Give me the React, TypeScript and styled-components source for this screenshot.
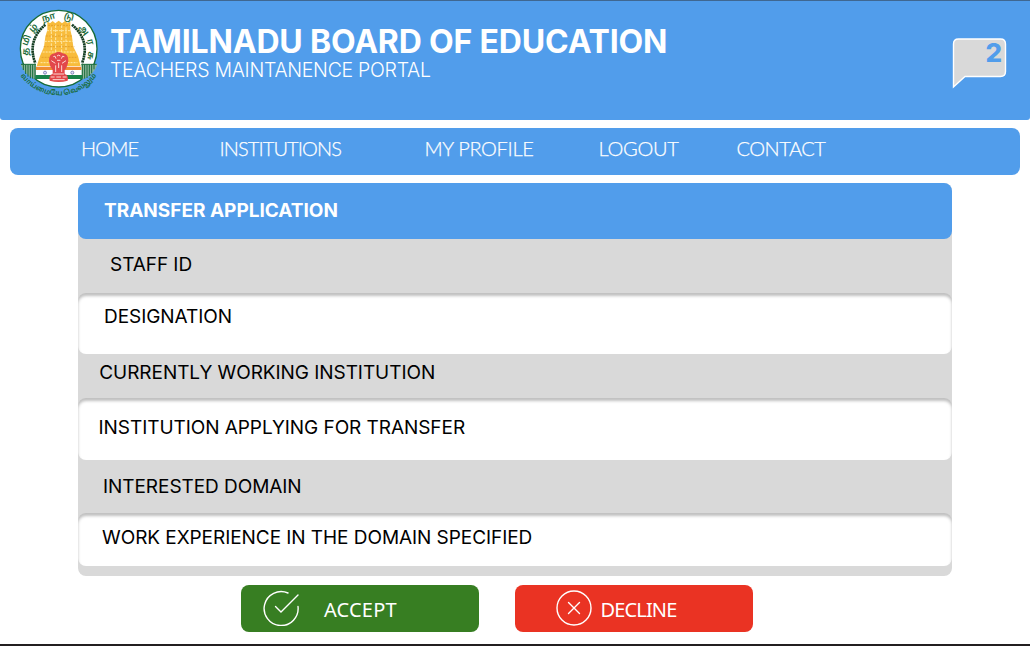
import React from "react";
import styled, { createGlobalStyle } from "styled-components";

const BLUE = "#519deb";

const GlobalStyle = createGlobalStyle`
  * { box-sizing: border-box; }
  body { margin: 0; background: #fff; }
`;

const Page = styled.div`
  width: 1030px;
  height: 646px;
  display: flex;
  flex-direction: column;
  overflow: hidden;
  background: #fff;
  border-bottom: 2px solid #231f20;
  font-family: Inter, sans-serif;
`;

const Header = styled.header`
  height: 119.5px;
  flex: none;
  display: flex;
  align-items: flex-start;
  background: ${BLUE};
  border-top: 1px solid #3f6791;
  border-radius: 0 0 3px 3px;
  padding: 7px 22px 0 18px;
`;

const Titles = styled.div`
  flex: 1;
  padding: 17px 0 0 12px;
  color: #fff;
`;

const Title = styled.h1`
  margin: 0;
  font-size: 32px;
  line-height: 34px;
  font-weight: 700;
  letter-spacing: -0.17px;
  white-space: nowrap;
`;

const Subtitle = styled.div`
  font-size: 19.5px;
  line-height: 22px;
  font-weight: 300;
  letter-spacing: -0.28px;
`;

const Notice = styled.div`
  position: relative;
  width: 56px;
  height: 54px;
  margin-top: 28px;
  svg { display: block; }
`;

const Count = styled.span`
  position: absolute;
  right: 6px;
  top: 1px;
  font-size: 26px;
  line-height: 32px;
  font-weight: 800;
  color: ${BLUE};
`;

const Nav = styled.nav`
  height: 47.5px;
  flex: none;
  margin: 8px 10.5px 0 10px;
  padding: 9px 0 0 71px;
  display: flex;
  background: ${BLUE};
  border-radius: 8px;
`;

const NavLink = styled.a<{ $slot: number; $track?: number }>`
  width: ${(p) => p.$slot}px;
  font-family: Lato, sans-serif;
  font-weight: 300;
  font-size: 20px;
  line-height: 23px;
  letter-spacing: ${(p) => p.$track ?? 0}px;
  color: #fff;
  -webkit-text-stroke: 0.25px #fff;
  white-space: nowrap;
`;

const Panel = styled.main`
  width: 874px;
  height: 393px;
  flex: none;
  margin: 8px 0 0 78px;
  background: #d9d9d9;
  border-radius: 8px;
  color: #000;
`;

const PanelTitle = styled.h2`
  margin: 0;
  height: 55.5px;
  padding: 16px 0 0 26px;
  border-radius: 8px;
  background: ${BLUE};
  color: #fff;
  font-size: 19px;
  line-height: 24px;
  font-weight: 700;
`;

const Row = styled.div<{ $h: number; $left: number; $top: number; $field?: boolean }>`
  height: ${(p) => p.$h}px;
  padding: ${(p) => p.$top}px 0 0 ${(p) => p.$left}px;
  font-size: 19px;
  line-height: 24px;
  letter-spacing: -0.06px;
  white-space: nowrap;
  ${(p) =>
    p.$field &&
    `background: #fff; border-radius: 8px; box-shadow: inset 0 3px 3px rgba(0, 0, 0, 0.25);`}
`;

const Actions = styled.div`
  display: flex;
  gap: 36px;
  margin: 8.5px 0 0 241px;
`;

const Action = styled.button<{ $bg: string; $left: number; $gap: number }>`
  width: 238px;
  height: 47.5px;
  border: 0;
  border-radius: 8px;
  padding: 0 0 0 ${(p) => p.$left}px;
  display: flex;
  align-items: center;
  gap: ${(p) => p.$gap}px;
  background: ${(p) => p.$bg};
  color: #fff;
  font-family: "Noto Sans", sans-serif;
  font-size: 20px;
  line-height: 24px;
`;

const ActionText = styled.span<{ $track: number }>`
  letter-spacing: ${(p) => p.$track}px;
  padding-top: 3px;
`;

const RING: [string, number, number, number][] = [
  ["த", 47, 155, -85],
  ["மி", 50, 121, -68],
  ["ழ்", 70, 84, -46],
  ["நா", 116, 52, -16],
  ["டு", 177, 51, 16],
  ["அ", 222, 90, 52],
  ["ர", 241, 126, 75],
  ["சு", 242, 167, 98],
];

function Emblem() {
  const tiers = [68, 84, 100, 116, 132, 148, 164, 180];
  return (
    <svg width="80" height="90" viewBox="24 24 240 270" overflow="visible">
      <circle cx="146" cy="146" r="115" fill="#fff" stroke="#176b38" strokeWidth="4" />
      <path d="M32 193H78V236H72Q42 222 32 193ZM214 193H262Q254 222 222 236H214Z" fill="#8fb59c" />
      <path
        d="M33 193H78M214 193H260M40 194V210M47 194V222M54 194V230M61 194V235M68 194V236M75 194V237M217 194V236M224 194V236M231 194V234M238 194V228M245 194V220M252 194V208"
        stroke="#176b38"
        strokeWidth="3"
      />
      <path d="M106 74Q50 122 76 190" fill="none" stroke="#123c20" strokeWidth="8" strokeDasharray="6 1.5" />
      <path d="M186 74Q242 122 216 190" fill="none" stroke="#123c20" strokeWidth="8" strokeDasharray="6 1.5" />
      <path d="M112 64L120 70L128 63L136 70L146 62L156 70L165 63L173 70L181 64V90L186 110L190 140L204 168L212 199H80L90 168L102 140L106 110L112 90Z" fill="#f8bc3c" />
      {tiers.map((y, i) => (
        <path
          key={y}
          d={`M${114 - i * 3.2} ${y + 8}H${180 + i * 3.2}`}
          stroke={i % 2 ? "#ffe9a8" : "#e5a12b"}
          strokeWidth="3"
          strokeDasharray="6 3"
        />
      ))}
      <path d="M124 82V150M137 76V158M155 76V158M168 82V150" stroke="#ffe9a8" strokeWidth="3" strokeDasharray="8 4" />
      <path d="M78 199H214V237H78Z" fill="#fff" />
      <path d="M78 200H214V210H78Z" fill="#ef8d32" />
      <path d="M76 225H216V237H76Z" fill="#18824a" />
      <circle cx="105" cy="218" r="4.5" fill="#dfe1f4" stroke="#5558a5" strokeWidth="2" />
      <circle cx="187" cy="218" r="4.5" fill="#dfe1f4" stroke="#5558a5" strokeWidth="2" />
      <path
        d="M134 160Q146 150 158 160Q176 162 175 184Q172 202 164 210V222Q177 225 173 242Q146 250 119 242Q115 225 128 222V210Q119 200 117 184Q116 162 134 160Z"
        fill="#e2474a"
      />
      <path
        d="M130 170Q136 164 138 176M154 176Q157 164 163 170M141 168Q146 163 151 168M124 182L136 190M168 182L156 190M141 181H151M146 188V204M137 196V216M155 196V216M122 231H134M139 231H153M158 231H170M128 239H164M130 222H162"
        fill="none"
        stroke="#fbdad4"
        strokeWidth="3"
      />
      <g fill="#176b38" fontSize="27" fontWeight="600" fontFamily="'Noto Sans Tamil', 'Noto Sans', sans-serif" textAnchor="middle">
        {RING.map(([t, x, y, r]) => (
          <text key={t} transform={`translate(${x} ${y}) rotate(${r})`} y="8">
            {t}
          </text>
        ))}
      </g>
      <path id="motto" d="M32 227A140 140 0 0 0 260 227" fill="none" />
      <text fill="#176b38" fontSize="21.5" fontWeight="600" fontFamily="'Noto Sans Tamil', 'Noto Sans', sans-serif">
        <textPath href="#motto" startOffset="50%" textAnchor="middle">
          வாய்மையே வெல்லும்
        </textPath>
      </text>
    </svg>
  );
}

export default function App() {
  return (
    <Page>
      <GlobalStyle />
      <Header>
        <Emblem />
        <Titles>
          <Title>TAMILNADU BOARD OF EDUCATION</Title>
          <Subtitle>TEACHERS MAINTANENCE PORTAL</Subtitle>
        </Titles>
        <Notice>
          <svg width="56" height="54" viewBox="0 0 56 54">
            <path
              d="M1.5 51V8Q1.5 3 6.5 3H48.5Q53.5 3 53.5 8V35.5Q53.5 40.5 48.5 40.5H13Z"
              fill="#d9d9d9"
              stroke="#fff"
              strokeWidth="1.4"
            />
          </svg>
          <Count>2</Count>
        </Notice>
      </Header>
      <Nav>
        <NavLink $slot={138.5} $track={-0.9}>HOME</NavLink>
        <NavLink $slot={205} $track={-0.9}>INSTITUTIONS</NavLink>
        <NavLink $slot={174} $track={-0.35}>MY PROFILE</NavLink>
        <NavLink $slot={138} $track={-0.3}>LOGOUT</NavLink>
        <NavLink $slot={100} $track={-0.5}>CONTACT</NavLink>
      </Nav>
      <Panel>
        <PanelTitle>TRANSFER APPLICATION</PanelTitle>
        <Row $h={54} $left={32} $top={14}>STAFF ID</Row>
        <Row $h={61.5} $left={26} $top={12.5} $field>DESIGNATION</Row>
        <Row $h={44} $left={21.3} $top={6.5}>CURRENTLY WORKING INSTITUTION</Row>
        <Row $h={62} $left={20.5} $top={18} $field>INSTITUTION APPLYING FOR TRANSFER</Row>
        <Row $h={53} $left={25} $top={15}>INTERESTED DOMAIN</Row>
        <Row $h={52.7} $left={24} $top={13} $field>WORK EXPERIENCE IN THE DOMAIN SPECIFIED</Row>
      </Panel>
      <Actions>
        <Action $bg="#377e22" $left={22} $gap={25}>
          <svg width="36" height="36" viewBox="0 0 36 36" fill="none" stroke="#fff" strokeWidth="1.4" strokeLinecap="round">
            <path d="M25 3A17 17 0 1 0 35 16.5" />
            <path d="M12.5 16.5L18 22L35 5" />
          </svg>
          <ActionText $track={0.2}>ACCEPT</ActionText>
        </Action>
        <Action $bg="#ea3323" $left={40.5} $gap={9}>
          <svg width="36" height="36" viewBox="0 0 36 36" fill="none" stroke="#fff" strokeWidth="1.4" strokeLinecap="round">
            <circle cx="18" cy="18" r="17" />
            <path d="M12.5 12.5L23.5 23.5M23.5 12.5L12.5 23.5" />
          </svg>
          <ActionText $track={-0.85}>DECLINE</ActionText>
        </Action>
      </Actions>
    </Page>
  );
}
